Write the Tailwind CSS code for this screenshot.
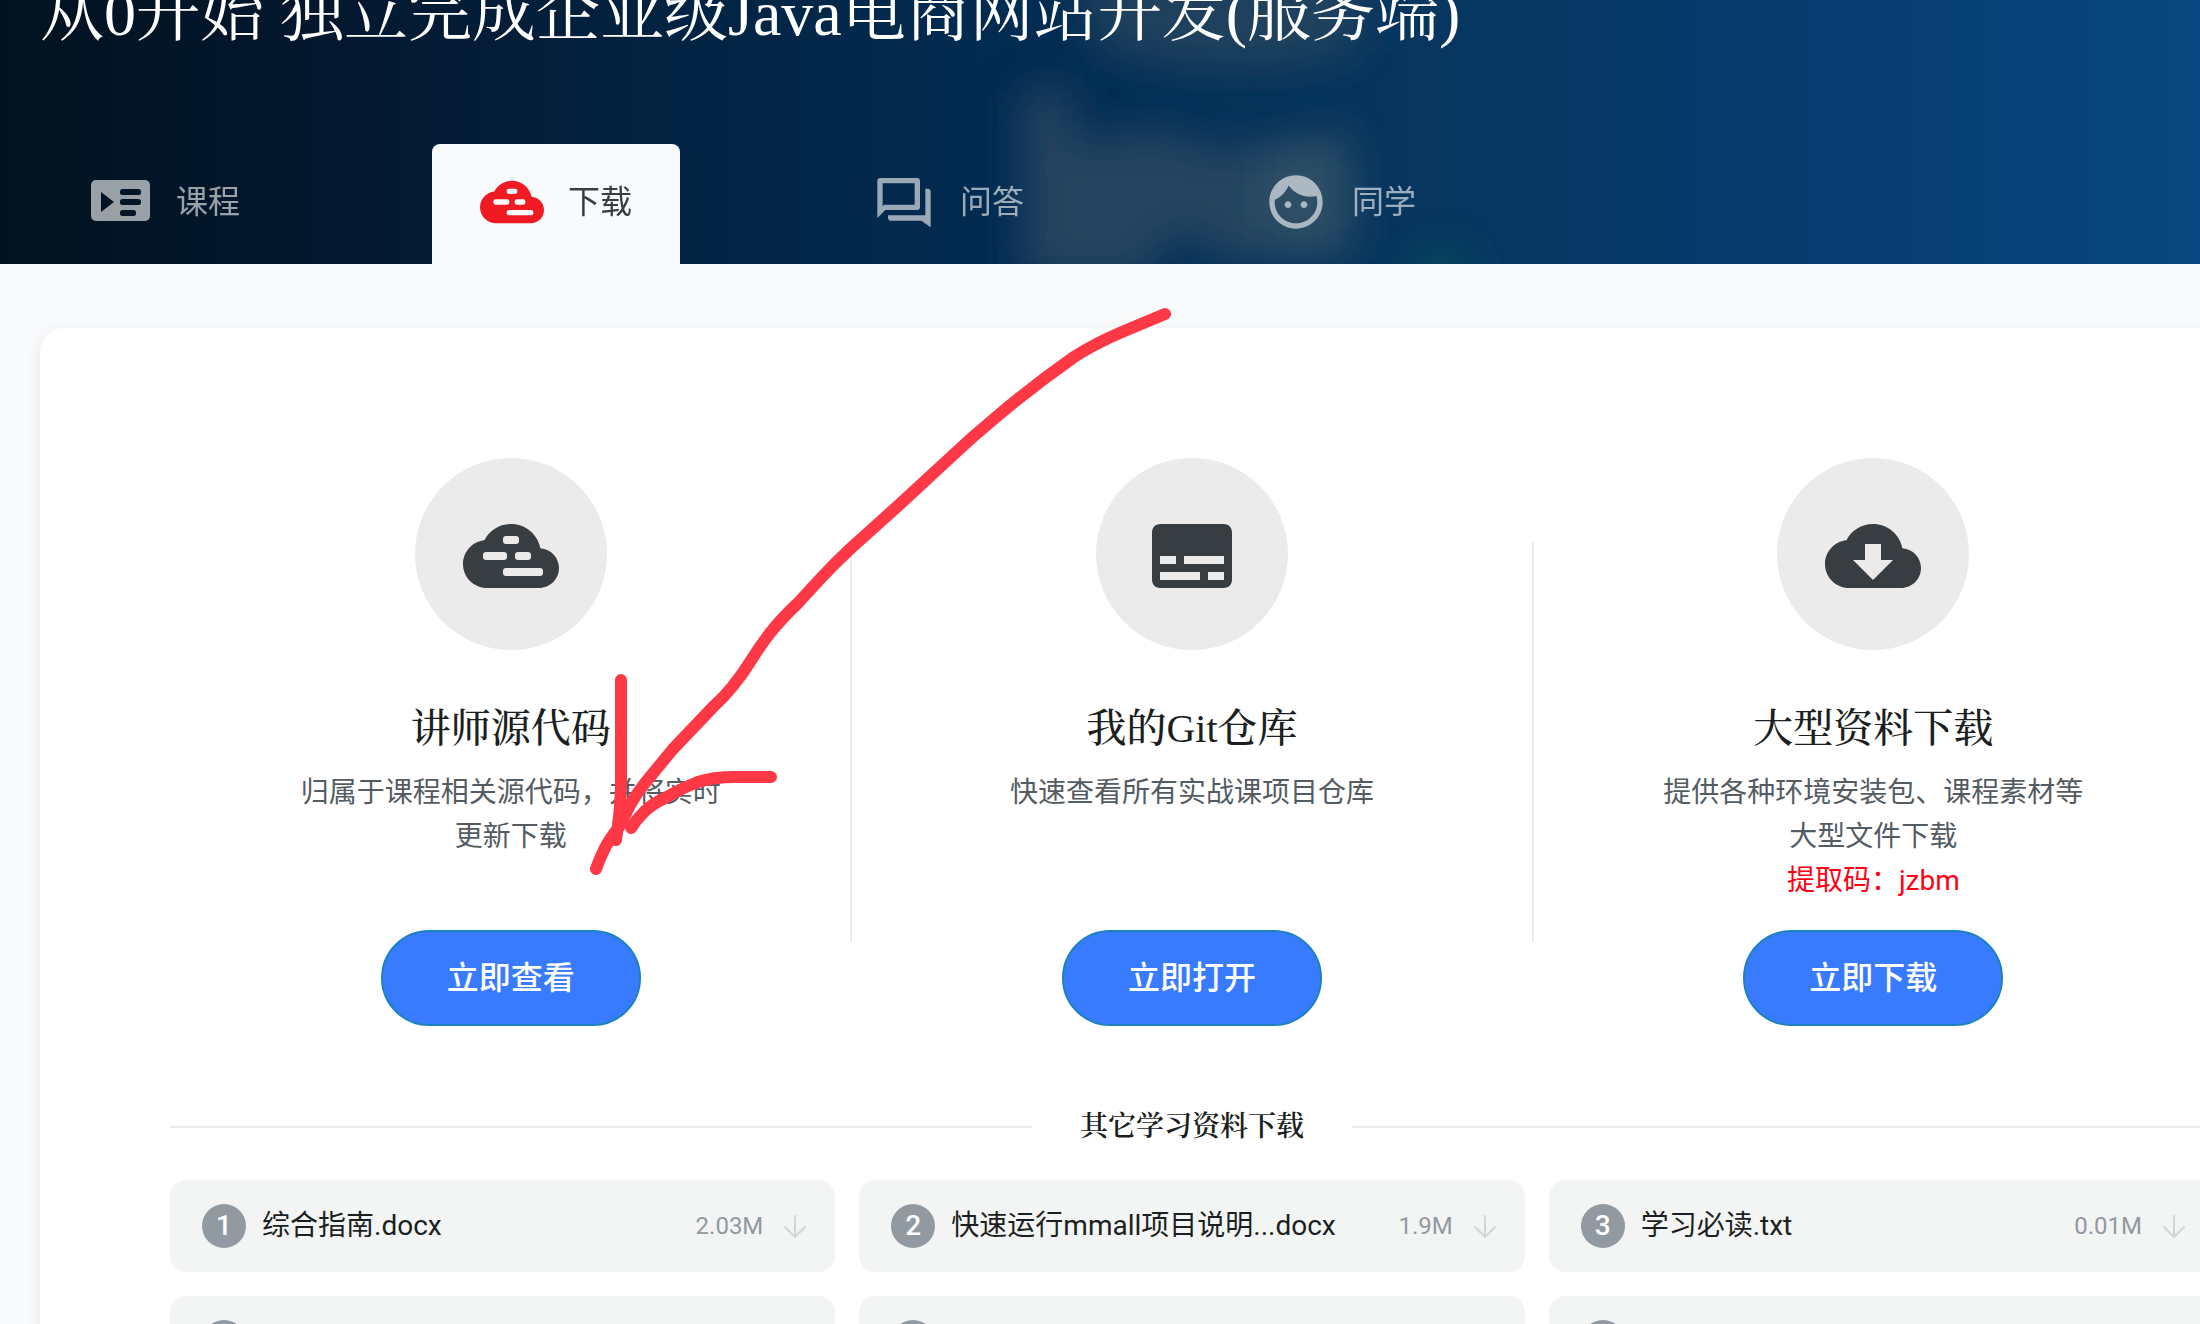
<!DOCTYPE html>
<html lang="zh-CN">
<head>
<meta charset="utf-8">
<title>从0开始 独立完成企业级Java电商网站开发(服务端)</title>
<meta name="viewport" content="width=device-width, initial-scale=1">
<script src="https://cdn.jsdelivr.net/npm/@tailwindcss/browser@4"></script>
</head>
<body class="relative h-screen overflow-hidden bg-[#f9fafc] font-[Roboto,'Noto_Sans_CJK_SC',sans-serif] text-[#1c1f21]">

<svg class="absolute size-0" aria-hidden="true">
  <mask id="cloud-bars" maskUnits="userSpaceOnUse" x="0" y="0" width="24" height="24">
    <rect width="24" height="24" fill="#fff"/>
    <rect x="10" y="7" width="4" height="2" rx="0.8"/>
    <rect x="5" y="11" width="6" height="2" rx="0.8"/>
    <rect x="13" y="11" width="4" height="2" rx="0.8"/>
    <rect x="10" y="15" width="10" height="2" rx="0.8"/>
  </mask>
  <symbol id="cloud-code" viewBox="0 0 24 24">
    <path mask="url(#cloud-bars)" fill="currentColor" d="M19.35 10.04C18.67 6.59 15.64 4 12 4 9.11 4 6.6 5.64 5.35 8.04 2.34 8.36 0 10.91 0 14c0 3.31 2.69 6 6 6h13c2.76 0 5-2.24 5-5 0-2.64-2.05-4.78-4.65-4.96z"/>
  </symbol>
  <symbol id="arrow-down" viewBox="0 0 32 32">
    <path fill="none" stroke="currentColor" stroke-width="2" stroke-linecap="round" stroke-linejoin="round" d="M16 6v20M6 17l10 10 10-10"/>
  </symbol>
</svg>

<header class="relative flex h-[264px] flex-col justify-end overflow-hidden bg-linear-to-r from-[#00121f] via-[#03294b] to-[#07477f] px-10">
  <!-- soft course artwork behind the heading -->
  <svg class="absolute bottom-0 left-0 h-[264px] w-full" viewBox="0 0 2200 264" preserveAspectRatio="none" aria-hidden="true">
    <defs>
      <filter id="soft" filterUnits="userSpaceOnUse" x="800" y="-150" width="900" height="600"><feGaussianBlur stdDeviation="20"/></filter>
      <linearGradient id="tone" x1="0" x2="1">
        <stop offset="0" stop-color="#01121f"/><stop offset="0.14" stop-color="#04172e"/><stop offset="0.32" stop-color="#022443"/><stop offset="0.46" stop-color="#032c52"/><stop offset="0.65" stop-color="#07365f"/><stop offset="0.82" stop-color="#073c70"/><stop offset="1" stop-color="#07477f"/>
      </linearGradient>
    </defs>
    <rect width="2200" height="264" fill="url(#tone)"/>
    <g filter="url(#soft)">
      <path d="M1060-60h300v110q-120 40-260 0z" fill="#26465f" opacity="0.75"/>
      <path d="M1022 90h50v50l90-10 60 20 130-20v130h-130l-40-30-40 50h-120z" fill="#2a4962" opacity="0.85"/>
      <path d="M1260 150h90v90h-90z" fill="#31566b" opacity="0.7"/>
      <circle cx="1440" cy="285" r="34" fill="#055a5c" opacity="0.6"/>
    </g>
  </svg>

  <h1 class="relative mb-[90px] text-[64px] leading-[80px] whitespace-nowrap text-white font-['Liberation_Serif','Noto_Serif_CJK_SC','Noto_Sans_CJK_SC',serif]">从0开始 独立完成企业级Java电商网站开发(服务端)</h1>

  <nav class="relative flex gap-36 text-[32px] leading-[48px] whitespace-nowrap text-white/60">
    <a href="#" class="flex h-[120px] items-center gap-6 px-12 pb-1">
      <svg class="size-16" viewBox="0 0 64 64" aria-hidden="true">
        <mask id="list-cut">
          <rect width="64" height="64" fill="#fff"/>
          <path d="M13 22v20l13-10z"/>
          <rect x="32" y="19" width="21" height="6" rx="2.500"/>
          <rect x="32" y="29" width="21" height="6" rx="2.500"/>
          <rect x="32" y="40" width="16" height="6" rx="2.500"/>
        </mask>
        <rect mask="url(#list-cut)" x="3" y="10" width="59" height="41" rx="5" fill="currentColor"/>
      </svg>
      课程
    </a>
    <a href="#" aria-current="page" class="flex h-[120px] items-center gap-6 rounded-t-lg bg-[#f9fafc] px-12 pb-1 text-[#373d41]">
      <svg class="size-16 text-[#f01a22]" viewBox="0 0 24 24" aria-hidden="true"><use href="#cloud-code"/></svg>
      下载
    </a>
    <a href="#" class="flex h-[120px] items-center gap-6 px-12 pb-1">
      <svg class="size-16" viewBox="0 0 24 24" aria-hidden="true"><path fill="currentColor" fill-rule="evenodd" d="M3 3h14c.55 0 1 .45 1 1v10c0 .55-.45 1-1 1H5l-3 3V4c0-.55.45-1 1-1zM4 5v8.600l.6-.6H16V5zM20 7h1c.55 0 1 .45 1 1v13.500L18.500 19H7c-.55 0-1-.45-1-1v-1h14z"/></svg>
      问答
    </a>
    <a href="#" class="flex h-[120px] items-center gap-6 px-12 pb-1">
      <svg class="size-16" viewBox="0 0 24 24" aria-hidden="true"><path fill="currentColor" d="M9 11.750c-.69 0-1.250.56-1.250 1.250s.56 1.250 1.250 1.250 1.250-.56 1.250-1.250-.56-1.250-1.250-1.250zm6 0c-.69 0-1.250.56-1.250 1.250s.56 1.250 1.250 1.250 1.250-.56 1.250-1.250-.56-1.250-1.250-1.250zM12 2C6.480 2 2 6.480 2 12s4.480 10 10 10 10-4.480 10-10S17.520 2 12 2zm0 18c-4.410 0-8-3.590-8-8 0-.29.02-.58.05-.86 2.360-1.050 4.230-2.980 5.210-5.370C11.070 8.330 14.050 10 17.420 10c.78 0 1.530-.09 2.250-.26.21.71.33 1.470.33 2.260 0 4.410-3.590 8-8 8z"/></svg>
      同学
    </a>
  </nav>
</header>

<main class="mt-16 -mr-36 ml-10 rounded-3xl bg-white px-[130px] pt-[130px] pb-16 shadow-[0_4px_16px_rgba(28,31,33,0.08)]">
  <div class="flex">
    <section class="flex flex-1 flex-col items-center text-center">
      <div class="flex size-48 items-center justify-center rounded-full bg-[#ebebeb] pt-1 text-[#373d41]">
        <svg class="size-24" viewBox="0 0 24 24" aria-hidden="true"><use href="#cloud-code"/></svg>
      </div>
      <h2 class="mt-[51px] text-[40px] leading-[56px] font-medium font-['Liberation_Serif','Noto_Serif_CJK_SC','Noto_Sans_CJK_SC',serif]">讲师源代码</h2>
      <p class="mt-[14px] min-h-[132px] w-[440px] text-[28px] leading-[44px] text-[#545c63]">归属于课程相关源代码，并将实时更新下载</p>
      <button type="button" class="mt-[27px] h-24 w-[260px] rounded-full border-2 border-[#1c82bd] bg-[#397bff] text-[32px] leading-[48px] font-medium text-white">立即查看</button>
    </section>

    <div class="-mx-px h-[400px] w-[2px] self-center bg-[#ebebeb]"></div>

    <section class="flex flex-1 flex-col items-center text-center">
      <div class="flex size-48 items-center justify-center rounded-full bg-[#ebebeb] pt-1 text-[#373d41]">
        <svg class="size-24" viewBox="0 0 24 24" aria-hidden="true"><path fill="currentColor" fill-rule="evenodd" d="M20 4H4c-1.100 0-2 .9-2 2v12c0 1.100.9 2 2 2h16c1.100 0 2-.9 2-2V6c0-1.100-.9-2-2-2zM4 12h4v2H4zm10 6H4v-2h10zm6 0h-4v-2h4zm0-4H10v-2h10z"/></svg>
      </div>
      <h2 class="mt-[51px] text-[40px] leading-[56px] font-medium font-['Liberation_Serif','Noto_Serif_CJK_SC','Noto_Sans_CJK_SC',serif]">我的Git仓库</h2>
      <p class="mt-[14px] min-h-[132px] w-[440px] text-[28px] leading-[44px] text-[#545c63]">快速查看所有实战课项目仓库</p>
      <button type="button" class="mt-[27px] h-24 w-[260px] rounded-full border-2 border-[#1c82bd] bg-[#397bff] text-[32px] leading-[48px] font-medium text-white">立即打开</button>
    </section>

    <div class="-mx-px h-[400px] w-[2px] self-center bg-[#ebebeb]"></div>

    <section class="flex flex-1 flex-col items-center text-center">
      <div class="flex size-48 items-center justify-center rounded-full bg-[#ebebeb] pt-1 text-[#373d41]">
        <svg class="size-24" viewBox="0 0 24 24" aria-hidden="true"><path fill="currentColor" fill-rule="evenodd" d="M19.350 10.040C18.670 6.590 15.640 4 12 4 9.110 4 6.600 5.640 5.350 8.040 2.340 8.360 0 10.910 0 14c0 3.310 2.690 6 6 6h13c2.760 0 5-2.240 5-5 0-2.640-2.050-4.780-4.650-4.960zM17 13l-5 5-5-5h3V9h4v4h3z"/></svg>
      </div>
      <h2 class="mt-[51px] text-[40px] leading-[56px] font-medium font-['Liberation_Serif','Noto_Serif_CJK_SC','Noto_Sans_CJK_SC',serif]">大型资料下载</h2>
      <p class="mt-[14px] min-h-[132px] w-[440px] text-[28px] leading-[44px] text-[#545c63]">提供各种环境安装包、课程素材等大型文件下载<br><span class="text-[#ff0015]">提取码：jzbm</span></p>
      <button type="button" class="mt-[27px] h-24 w-[260px] rounded-full border-2 border-[#1c82bd] bg-[#397bff] text-[32px] leading-[48px] font-medium text-white">立即下载</button>
    </section>
  </div>

  <div class="mt-20 flex items-center gap-12">
    <div class="h-[2px] flex-1 bg-[#ebebeb]"></div>
    <h3 class="text-[28px] leading-[42px] font-semibold font-['Liberation_Serif','Noto_Serif_CJK_SC','Noto_Sans_CJK_SC',serif]">其它学习资料下载</h3>
    <div class="h-[2px] flex-1 bg-[#ebebeb]"></div>
  </div>

  <div class="mt-8 grid grid-cols-3 gap-6 text-[28px] leading-[44px] whitespace-nowrap">
    <a href="#" class="flex h-[92px] items-center gap-4 rounded-2xl bg-[#f3f5f4] pr-6 pl-8">
      <span class="size-11 rounded-full bg-[#9199a1] text-center font-medium text-white">1</span>
      <span class="flex-1">综合指南.docx</span>
      <span class="text-[24px] text-[#9199a1]">2.03M</span>
      <svg class="size-8 text-[#d3d6d8]" aria-hidden="true"><use href="#arrow-down"/></svg>
    </a>
    <a href="#" class="flex h-[92px] items-center gap-4 rounded-2xl bg-[#f3f5f4] pr-6 pl-8">
      <span class="size-11 rounded-full bg-[#9199a1] text-center font-medium text-white">2</span>
      <span class="flex-1">快速运行mmall项目说明...docx</span>
      <span class="text-[24px] text-[#9199a1]">1.9M</span>
      <svg class="size-8 text-[#d3d6d8]" aria-hidden="true"><use href="#arrow-down"/></svg>
    </a>
    <a href="#" class="flex h-[92px] items-center gap-4 rounded-2xl bg-[#f3f5f4] pr-6 pl-8">
      <span class="size-11 rounded-full bg-[#9199a1] text-center font-medium text-white">3</span>
      <span class="flex-1">学习必读.txt</span>
      <span class="text-[24px] text-[#9199a1]">0.01M</span>
      <svg class="size-8 text-[#d3d6d8]" aria-hidden="true"><use href="#arrow-down"/></svg>
    </a>
    <div class="flex h-[92px] items-center rounded-2xl bg-[#f3f5f4] px-8"><span class="size-11 rounded-full bg-[#9199a1]"></span></div>
    <div class="flex h-[92px] items-center rounded-2xl bg-[#f3f5f4] px-8"><span class="size-11 rounded-full bg-[#9199a1]"></span></div>
    <div class="flex h-[92px] items-center rounded-2xl bg-[#f3f5f4] px-8"><span class="size-11 rounded-full bg-[#9199a1]"></span></div>
  </div>
</main>

<!-- hand-drawn arrow pointing at the source code button -->
<svg class="pointer-events-none absolute top-[300px] left-[580px] h-[590px] w-[600px]" viewBox="580 300 600 590" fill="none" stroke="#ff3846" stroke-width="12" stroke-linecap="round" stroke-linejoin="round" aria-hidden="true">
  <path d="M1165 314L1122 332Q1094 344 1074 357Q1034 385 995 418Q972 437 952 456Q926 480 900 504L850 549Q834 564 821 578L798 603Q782 618 770 633Q760 646 750 662Q742 675 732 687Q724 697 714 706L673 749L645 783Q637 793 630 805L619 827Q608 841 604 850Q599 860 596 869"/>
  <path d="M621 680V787Q620 812 618 825L616 840"/>
  <path d="M771 777H735Q713 777 698 782Q682 788 665 798Q652 804 644 812Q636 820 631 828"/>
</svg>
</body>
</html>
